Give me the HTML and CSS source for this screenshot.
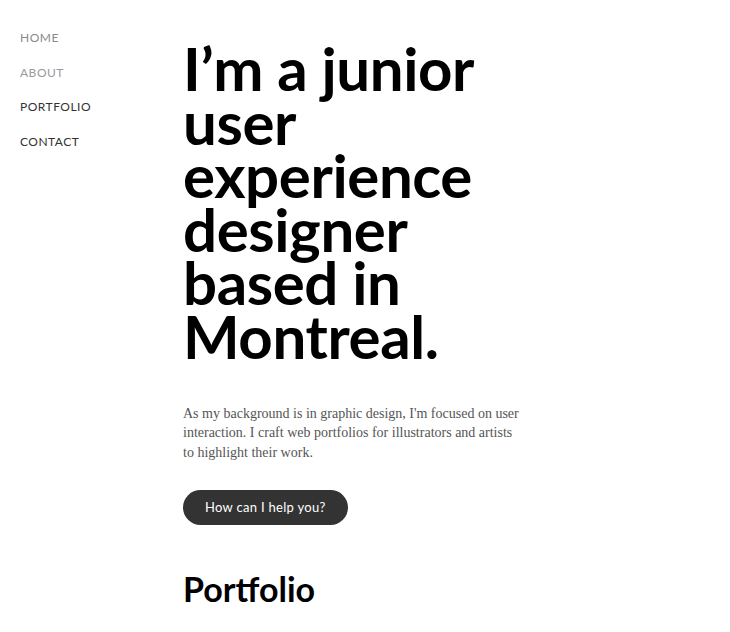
FILE: index.html
```html
<!DOCTYPE html>
<html lang="en">
<head>
<meta charset="utf-8">
<title>Portfolio</title>
<link rel="stylesheet" href="styles.css">
</head>
<body>
<div class="page">
  <nav class="nav">
    <a class="nav-link muted" href="#">HOME</a>
    <a class="nav-link soft" href="#">ABOUT</a>
    <a class="nav-link" href="#">PORTFOLIO</a>
    <a class="nav-link" href="#">CONTACT</a>
  </nav>
  <main class="main">
    <h1 class="hero">I’m a junior user experience designer based in Montreal.</h1>
    <p class="intro">As my background is in graphic design, I'm focused on user<br>interaction. I craft web portfolios for illustrators and artists<br>to highlight their work.</p>
    <a class="cta" href="#">How can I help you?</a>
    <h2 class="section-title">Portfolio</h2>
  </main>
</div>
</body>
</html>
```
FILE: styles.css
```css
* { box-sizing: border-box; }
html, body { margin: 0; padding: 0; background: #fff; }
body { overflow: hidden; }
.page {
  display: flex;
  padding: 0 0 0 20px;
}
.nav {
  display: flex;
  flex-direction: column;
  width: 163px;
  flex-shrink: 0;
  padding-top: 31px;
  gap: 20px;
}
.nav-link {
  font-family: "Lato", "Liberation Sans", sans-serif;
  font-size: 12px;
  line-height: 14.5px;
  letter-spacing: 0.5px;
  color: #333;
  text-decoration: none;
}
.nav-link.muted { color: #8a8a8a; }
.nav-link.soft { color: #9a9a9a; }
.main {
  width: 400px;
  padding-top: 42px;
}
.hero {
  font-family: "Lato", "Liberation Sans", sans-serif;
  font-weight: 700;
  font-size: 60px;
  line-height: 53.6px;
  letter-spacing: -0.4px;
  color: #000;
  margin: 0;
  width: 330px;
}
.intro {
  font-family: "Liberation Serif", serif;
  font-size: 14px;
  line-height: 19.5px;
  color: #555;
  margin: 40px 0 0;
  width: 380px;
}
.cta {
  display: inline-block;
  margin-top: 28px;
  background: #333;
  color: #fff;
  font-family: "Lato", "Liberation Sans", sans-serif;
  font-size: 13px;
  line-height: 35px;
  height: 35px;
  padding: 0 22px;
  border-radius: 18px;
  text-decoration: none;
  letter-spacing: 0.3px;
}
.section-title {
  font-family: "Lato", "Liberation Sans", sans-serif;
  font-weight: 700;
  font-size: 34px;
  line-height: 40px;
  margin: 44px 0 0;
  color: #000;
  letter-spacing: 0;
}
```
